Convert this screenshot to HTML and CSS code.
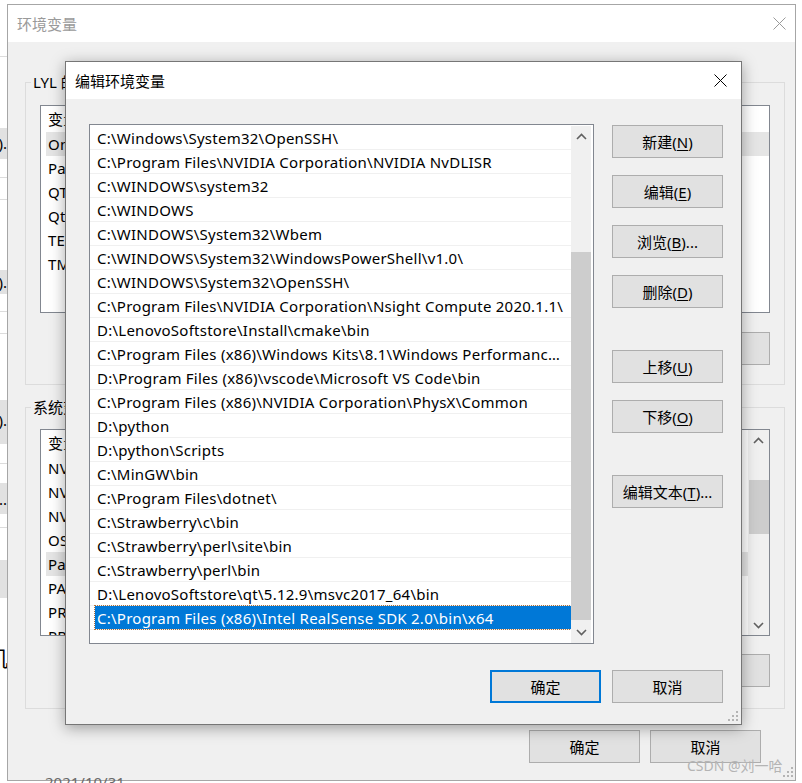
FILE: index.html
```html
<!DOCTYPE html>
<html lang="zh-CN">
<head>
<meta charset="utf-8">
<title>编辑环境变量</title>
<link rel="stylesheet" href="styles.css">
</head>
<body>
<div class="desk">

  <div class="win-behind">
    <div class="wb-line wb-l1"></div>
    <div class="wb-blk wb-a"><span>(D).</span></div>
    <div class="wb-line wb-l2"></div>
    <div class="wb-line wb-l3"></div>
    <div class="wb-blk wb-b"><span>(D).</span></div>
    <div class="wb-line wb-l4"></div>
    <div class="wb-line wb-l5"></div>
    <div class="wb-blk wb-c"><span>(D).</span></div>
    <div class="wb-line wb-l6"></div>
    <div class="wb-blk wb-d"><span>...</span></div>
    <div class="wb-line wb-l7"></div>
    <div class="wb-blk wb-e"></div>
    <div class="wb-char">机</div>
  </div>

  <div class="win main-win">
    <div class="titlebar">
      <span class="title inactive">环境变量</span>
      <svg class="close-x" width="13" height="13" viewBox="0 0 13 13"><path d="M0.5 0.5L12.5 12.5M12.5 0.5L0.5 12.5" stroke="#9a9a9a" stroke-width="1" fill="none"/></svg>
    </div>
    <div class="main-body">
      <div class="group g-user">
        <span class="group-title">LYL 的用户变量(<u>U</u>)</span>
        <div class="vlist vlist-user">
          <div class="vhead"><span class="c1">变量</span><span class="c2">值</span></div>
          <div class="vrow sel-gray"><span class="c1">OneDrive</span><span class="c2">C:\Users\LYL\OneDrive</span></div>
          <div class="vrow"><span class="c1">Path</span><span class="c2">C:\Users\LYL\AppData\Local\Microsoft\WindowsApps</span></div>
          <div class="vrow"><span class="c1">QTDIR</span><span class="c2">D:\LenovoSoftstore\qt\5.12.9\msvc2017_64</span></div>
          <div class="vrow"><span class="c1">Qt5_DIR</span><span class="c2">D:\LenovoSoftstore\qt\5.12.9</span></div>
          <div class="vrow"><span class="c1">TEMP</span><span class="c2">C:\Users\LYL\AppData\Local\Temp</span></div>
          <div class="vrow"><span class="c1">TMP</span><span class="c2">C:\Users\LYL\AppData\Local\Temp</span></div>
        </div>
        <div class="btnrow">
          <button class="btn">新建(<u>N</u>)...</button>
          <button class="btn">编辑(<u>E</u>)...</button>
          <button class="btn">删除(<u>D</u>)</button>
        </div>
      </div>

      <div class="group g-sys">
        <span class="group-title">系统变量(<u>S</u>)</span>
        <div class="vlist vlist-sys">
          <div class="vlist-rows">
            <div class="vhead"><span class="c1">变量</span><span class="c2">值</span></div>
            <div class="vrow"><span class="c1">NVCUDASAMPLES_ROOT</span><span class="c2">C:\ProgramData\NVIDIA Corporation</span></div>
            <div class="vrow"><span class="c1">NVCUDASAMPLES11_0_ROOT</span><span class="c2">C:\ProgramData\NVIDIA Corporation</span></div>
            <div class="vrow"><span class="c1">NVTOOLSEXT_PATH</span><span class="c2">C:\Program Files\NVIDIA Corporation</span></div>
            <div class="vrow"><span class="c1">OS</span><span class="c2">Windows_NT</span></div>
            <div class="vrow sel-gray"><span class="c1">Path</span><span class="c2">C:\Windows\System32\OpenSSH\</span></div>
            <div class="vrow"><span class="c1">PATHEXT</span><span class="c2">.COM;.EXE;.BAT;.CMD</span></div>
            <div class="vrow"><span class="c1">PROCESSOR_ARCHITECTURE</span><span class="c2">AMD64</span></div>
            <div class="vrow"><span class="c1">PROCESSOR_IDENTIFIER</span><span class="c2">Intel64 Family 6</span></div>
          </div>
          <div class="vscroll">
            <div class="arr"><svg width="11" height="7" viewBox="0 0 11 7"><path d="M1 6L5.5 1.5L10 6" stroke="#606060" stroke-width="1.6" fill="none"/></svg></div>
            <div class="track track-sys"><div class="thumb thumb-sys"></div></div>
            <div class="arr"><svg width="11" height="7" viewBox="0 0 11 7"><path d="M1 1L5.5 5.5L10 1" stroke="#606060" stroke-width="1.6" fill="none"/></svg></div>
          </div>
        </div>
        <div class="btnrow">
          <button class="btn">新建(<u>W</u>)...</button>
          <button class="btn">编辑(<u>I</u>)...</button>
          <button class="btn">删除(<u>L</u>)</button>
        </div>
      </div>

      <div class="footer main-footer">
        <button class="btn">确定</button>
        <button class="btn">取消</button>
      </div>
    </div>
    <svg class="grip grip-main" width="10" height="10" viewBox="0 0 10 10"><g fill="#b4b4b4"><rect x="8" y="0" width="2" height="2"/><rect x="4" y="4" width="2" height="2"/><rect x="8" y="4" width="2" height="2"/><rect x="0" y="8" width="2" height="2"/><rect x="4" y="8" width="2" height="2"/><rect x="8" y="8" width="2" height="2"/></g></svg>
  </div>

  <div class="date">2021/10/31</div>

  <div class="win dialog">
    <div class="titlebar dlg-titlebar">
      <span class="title">编辑环境变量</span>
      <svg class="close-x dlg-close" width="13" height="13" viewBox="0 0 13 13"><path d="M0.5 0.5L12.5 12.5M12.5 0.5L0.5 12.5" stroke="#000" stroke-width="1" fill="none"/></svg>
    </div>
    <div class="dlg-body">
      <div class="dlg-top">
        <div class="plist">
          <div class="prows">
            <div class="prow"><span class="ptxt">C:\Windows\System32\OpenSSH\</span></div>
            <div class="prow"><span class="ptxt">C:\Program Files\NVIDIA Corporation\NVIDIA NvDLISR</span></div>
            <div class="prow"><span class="ptxt">C:\WINDOWS\system32</span></div>
            <div class="prow"><span class="ptxt">C:\WINDOWS</span></div>
            <div class="prow"><span class="ptxt">C:\WINDOWS\System32\Wbem</span></div>
            <div class="prow"><span class="ptxt">C:\WINDOWS\System32\WindowsPowerShell\v1.0\</span></div>
            <div class="prow"><span class="ptxt">C:\WINDOWS\System32\OpenSSH\</span></div>
            <div class="prow"><span class="ptxt">C:\Program Files\NVIDIA Corporation\Nsight Compute 2020.1.1\</span></div>
            <div class="prow"><span class="ptxt">D:\LenovoSoftstore\Install\cmake\bin</span></div>
            <div class="prow"><span class="ptxt">C:\Program Files (x86)\Windows Kits\8.1\Windows Performance Toolkit\</span></div>
            <div class="prow"><span class="ptxt">D:\Program Files (x86)\vscode\Microsoft VS Code\bin</span></div>
            <div class="prow"><span class="ptxt">C:\Program Files (x86)\NVIDIA Corporation\PhysX\Common</span></div>
            <div class="prow"><span class="ptxt">D:\python</span></div>
            <div class="prow"><span class="ptxt">D:\python\Scripts</span></div>
            <div class="prow"><span class="ptxt">C:\MinGW\bin</span></div>
            <div class="prow"><span class="ptxt">C:\Program Files\dotnet\</span></div>
            <div class="prow"><span class="ptxt">C:\Strawberry\c\bin</span></div>
            <div class="prow"><span class="ptxt">C:\Strawberry\perl\site\bin</span></div>
            <div class="prow"><span class="ptxt">C:\Strawberry\perl\bin</span></div>
            <div class="prow"><span class="ptxt">D:\LenovoSoftstore\qt\5.12.9\msvc2017_64\bin</span></div>
            <div class="prow selected"><span class="ptxt">C:\Program Files (x86)\Intel RealSense SDK 2.0\bin\x64</span></div>
          </div>
          <div class="pscroll">
            <div class="arr parr"><svg width="11" height="7" viewBox="0 0 11 7"><path d="M1 6L5.5 1.5L10 6" stroke="#606060" stroke-width="1.6" fill="none"/></svg></div>
            <div class="track track-dlg"><div class="thumb thumb-dlg"></div></div>
            <div class="arr parr"><svg width="11" height="7" viewBox="0 0 11 7"><path d="M1 1L5.5 5.5L10 1" stroke="#606060" stroke-width="1.6" fill="none"/></svg></div>
          </div>
        </div>
        <div class="btncol">
          <button class="btn">新建(<u>N</u>)</button>
          <button class="btn">编辑(<u>E</u>)</button>
          <button class="btn">浏览(<u>B</u>)...</button>
          <button class="btn">删除(<u>D</u>)</button>
          <button class="btn gap-big">上移(<u>U</u>)</button>
          <button class="btn">下移(<u>O</u>)</button>
          <button class="btn gap-big">编辑文本(<u>T</u>)...</button>
        </div>
      </div>
      <div class="footer dlg-footer">
        <button class="btn btn-default">确定</button>
        <button class="btn">取消</button>
      </div>
    </div>
    <svg class="grip grip-dlg" width="10" height="10" viewBox="0 0 10 10"><g fill="#b4b4b4"><rect x="8" y="0" width="2" height="2"/><rect x="4" y="4" width="2" height="2"/><rect x="8" y="4" width="2" height="2"/><rect x="0" y="8" width="2" height="2"/><rect x="4" y="8" width="2" height="2"/><rect x="8" y="8" width="2" height="2"/></g></svg>
  </div>

  <div class="watermark">CSDN @刘一哈</div>
</div>
</body>
</html>
```

FILE: styles.css
```css
* { box-sizing: border-box; }

html, body {
  margin: 0;
  padding: 0;
  background: #ffffff;
}

body {
  font-family: "Noto Sans", "Noto Sans CJK SC", sans-serif;
  font-size: 15px;
  color: #000;
}

.desk {
  position: relative;
  width: 802px;
  height: 783px;
  overflow: hidden;
}

/* window peeking on the far left */
.win-behind {
  position: absolute;
  left: 0;
  top: 0;
  width: 7px;
  height: 783px;
  background: #fff;
  overflow: hidden;
}
.wb-line { position: absolute; left: 0; width: 7px; height: 1px; background: #dcdcdc; }
.wb-l1 { top: 56px; }
.wb-l2 { top: 177px; }
.wb-l3 { top: 199px; }
.wb-l4 { top: 311px; }
.wb-l5 { top: 333px; }
.wb-l6 { top: 463px; }
.wb-l7 { top: 527px; }
.wb-blk {
  position: absolute;
  left: 0;
  width: 7px;
  background: #e1e1e1;
  font-size: 15px;
  line-height: 20px;
  white-space: nowrap;
  display: flex;
  justify-content: flex-end;
  align-items: flex-start;
  overflow: hidden;
}
.wb-blk span { flex: none; }
.wb-a { top: 128px; height: 31px; padding-top: 5px; }
.wb-b { top: 270px; height: 24px; padding-top: 2px; }
.wb-c { top: 400px; height: 44px; padding-top: 10px; }
.wb-d { top: 483px; height: 31px; padding-top: 6px; }
.wb-e { top: 560px; height: 38px; }
.wb-char {
  position: absolute;
  left: -13px;
  top: 645px;
  font-size: 21px;
  line-height: 26px;
  color: #000;
}

/* windows */
.win {
  position: absolute;
  background: #f0f0f0;
}
.main-win {
  left: 7px;
  top: 4px;
  width: 789px;
  height: 777px;
  border: 1px solid #a6a6a6;
}
.dialog {
  left: 65px;
  top: 61px;
  width: 677px;
  height: 664px;
  border: 1px solid #767676;
  box-shadow: 0 3px 14px rgba(0, 0, 0, 0.35);
  z-index: 5;
}

.titlebar {
  height: 37px;
  background: #fff;
  display: flex;
  align-items: center;
  justify-content: space-between;
  padding-left: 9px;
  padding-right: 9px;
}
.title { font-size: 15px; line-height: 20px; }
.title.inactive { color: #9a9a9a; }
.close-x { display: block; }
.dlg-titlebar { padding-right: 14px; }

/* main window body */
.main-body {
  padding: 40px 10px 0 17px;
}
.group {
  position: relative;
  border: 1px solid #dcdcdc;
  padding: 22px 14px 19px 14px;
}
.g-sys {
  margin-top: 22px;
  padding-top: 21px;
  padding-bottom: 21px;
}
.group-title {
  position: absolute;
  top: -11px;
  left: 5px;
  padding: 0 2px;
  background: #f0f0f0;
  line-height: 20px;
  white-space: nowrap;
}

.vlist {
  border: 1px solid #828790;
  background: #fff;
  overflow: hidden;
}
.vlist-user { height: 208px; }
.vlist-sys {
  height: 207px;
  display: flex;
}
.vlist-rows { flex: 1; overflow: hidden; }
.vhead, .vrow {
  display: flex;
  margin-left: 5px;
  padding-left: 2px;
  white-space: nowrap;
  letter-spacing: 0.25px;
}
.vhead { height: 26px; line-height: 26px; }
.vrow { height: 24px; line-height: 24px; }
.vrow.sel-gray { background: #e5e5e5; }
.c1 { width: 250px; }
.c2 { flex: 1; }

.vscroll {
  width: 21px;
  background: #f0f0f0;
  display: flex;
  flex-direction: column;
}
.arr {
  height: 20px;
  display: flex;
  align-items: center;
  justify-content: center;
}
.arr svg { display: block; }
.track { flex: 1; }
.track-sys { padding-top: 30px; }
.thumb { background: #cdcdcd; }
.thumb-sys { height: 54px; margin-left: 1px; }

.btnrow {
  display: flex;
  justify-content: flex-end;
  gap: 10px;
  margin-top: 19px;
}
.g-sys .btnrow { margin-top: 18px; }

.btn {
  width: 111px;
  height: 33px;
  background: #e1e1e1;
  border: 1px solid #adadad;
  border-radius: 0;
  font-family: "Noto Sans", "Noto Sans CJK SC", sans-serif;
  font-size: 15px;
  line-height: 20px;
  color: #000;
  padding: 0;
  margin: 0;
}
.btn u { text-underline-offset: 2px; }
.btn-default { border: 2px solid #0078d7; }

.footer {
  display: flex;
  justify-content: flex-end;
}
.main-footer {
  margin-top: 21px;
  margin-right: 24px;
  gap: 10px;
}

.grip { position: absolute; }
.grip-main { right: 2px; bottom: 3px; }
.grip-dlg { right: 3px; bottom: 3px; }

.date {
  position: absolute;
  left: 45px;
  top: 772px;
  color: #6a6a6a;
  font-size: 15px;
  line-height: 20px;
  z-index: 2;
}

/* dialog body */
.dlg-body {
  padding: 25px 18px 21px 23px;
}
.dlg-top {
  display: flex;
  align-items: flex-start;
}
.plist {
  width: 505px;
  height: 520px;
  border: 1px solid #828790;
  background: #fff;
  display: flex;
  padding-top: 1px;
}
.prows {
  width: 481px;
  overflow: hidden;
}
.prow {
  height: 24px;
  border-bottom: 1px solid #f0f0f0;
  padding-left: 5px;
}
.ptxt {
  display: block;
  height: 23px;
  line-height: 24px;
  padding-left: 2px;
  padding-right: 4px;
  white-space: nowrap;
  overflow: hidden;
  text-overflow: ellipsis;
  letter-spacing: 0.25px;
}
.prow.selected .ptxt {
  background: #0078d7;
  color: #fff;
  outline: 1px dotted #b0703a;
}
.pscroll {
  width: 20px;
  margin-right: 2px;
  background: #f0f0f0;
  display: flex;
  flex-direction: column;
  height: 517px;
}
.parr { height: 21px; }
.track-dlg { padding-top: 105px; }
.thumb-dlg { height: 368px; }

.btncol {
  margin-left: 18px;
  padding-top: 1px;
  display: flex;
  flex-direction: column;
  gap: 17px;
}
.btncol .gap-big { margin-top: 25px; }

.dlg-footer {
  margin-top: 26px;
  gap: 11px;
}

.watermark {
  position: absolute;
  left: 687px;
  top: 756px;
  font-size: 14px;
  line-height: 20px;
  color: #b4b4b4;
  z-index: 6;
  white-space: nowrap;
}
```
